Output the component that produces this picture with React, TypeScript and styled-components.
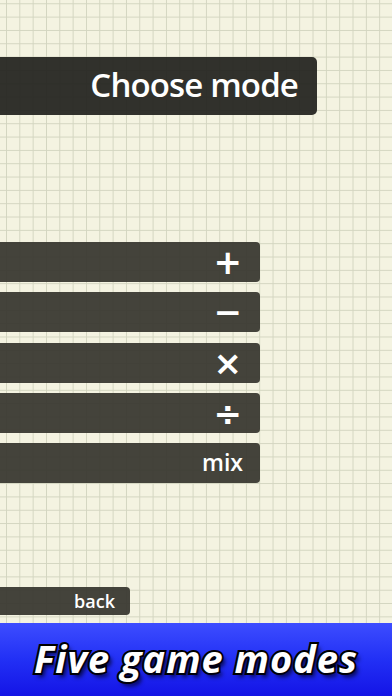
import React from "react";
import styled, { createGlobalStyle } from "styled-components";

const Global = createGlobalStyle`
  html, body { margin: 0; padding: 0; }
  body { width: 392px; height: 696px; overflow: hidden; font-family: "Open Sans", "DejaVu Sans", sans-serif; }
  #root { width: 392px; height: 696px; }
`;

const Screen = styled.div`
  width: 392px;
  height: 696px;
  display: flex;
  flex-direction: column;
`;

const Paper = styled.div`
  flex: 1;
  display: flex;
  flex-direction: column;
  align-items: flex-start;
  padding-top: 57px;
  background-color: #f4f3e1;
  background-image:
    linear-gradient(to right, #d3d5c0 1px, transparent 1px),
    linear-gradient(to bottom, #d3d5c0 1px, transparent 1px);
  background-size: 13.33px 13.33px;
  background-position: 6px 3.3px;
`;

const TitleBar = styled.div`
  width: 317px;
  height: 58px;
  box-sizing: border-box;
  background: rgba(38, 38, 34, 0.95);
  border-radius: 0 5px 5px 0;
  display: flex;
  align-items: center;
  justify-content: flex-end;
  padding-right: 19px;
  padding-bottom: 3px;
  color: #fff;
  font-family: "Open Sans", sans-serif;
  font-weight: 600;
  font-size: 33px;
  letter-spacing: -0.85px;
`;

const ModeList = styled.div`
  margin-top: 127px;
  display: flex;
  flex-direction: column;
  gap: 10.3px;
`;

const ModeButton = styled.div<{ $text?: boolean }>`
  width: 260px;
  height: 40px;
  box-sizing: border-box;
  background: rgba(58, 57, 50, 0.95);
  border-radius: 0 4px 4px 0;
  display: flex;
  align-items: center;
  justify-content: flex-end;
  padding-right: ${(p) => (p.$text ? "17px" : "18px")};
  padding-bottom: ${(p) => (p.$text ? "2px" : "0")};
  color: #fff;
  font-family: ${(p) => (p.$text ? `"Open Sans", sans-serif` : `"DejaVu Sans", sans-serif`)};
  font-weight: ${(p) => (p.$text ? 600 : 700)};
  font-size: ${(p) => (p.$text ? "23px" : "34px")};
  line-height: 1;
`;

const BackButton = styled.div`
  margin-top: 104px;
  width: 130px;
  height: 28px;
  box-sizing: border-box;
  background: rgba(58, 57, 50, 0.95);
  border-radius: 0 4px 4px 0;
  display: flex;
  align-items: center;
  justify-content: flex-end;
  padding-right: 15px;
  color: #fff;
  font-family: "Open Sans", sans-serif;
  font-weight: 600;
  font-size: 18px;
`;

const Banner = styled.div`
  height: 73px;
  background: linear-gradient(to bottom, #3d4dff 0%, #2230f5 50%, #1414e6 100%);
  display: flex;
  align-items: center;
  justify-content: center;
  padding-bottom: 4px;
  box-sizing: border-box;
`;

const BannerText = styled.div`
  font-family: "Open Sans", sans-serif;
  font-style: italic;
  font-weight: 700;
  font-size: 38px;
  color: #fff;
  letter-spacing: 1px;
  -webkit-text-stroke: 4px #000;
  paint-order: stroke fill;
  text-shadow: 3px 4px 4px rgba(0, 0, 30, 0.8);
`;

const modes: { label: string; text?: boolean }[] = [
  { label: "+" },
  { label: "−" },
  { label: "×" },
  { label: "÷" },
  { label: "mix", text: true },
];

export default function App() {
  return (
    <Screen>
      <Global />
      <Paper>
        <TitleBar>Choose mode</TitleBar>
        <ModeList>
          {modes.map((m) => (
            <ModeButton key={m.label} $text={m.text}>
              {m.label}
            </ModeButton>
          ))}
        </ModeList>
        <BackButton>back</BackButton>
      </Paper>
      <Banner>
        <BannerText>Five game modes</BannerText>
      </Banner>
    </Screen>
  );
}
